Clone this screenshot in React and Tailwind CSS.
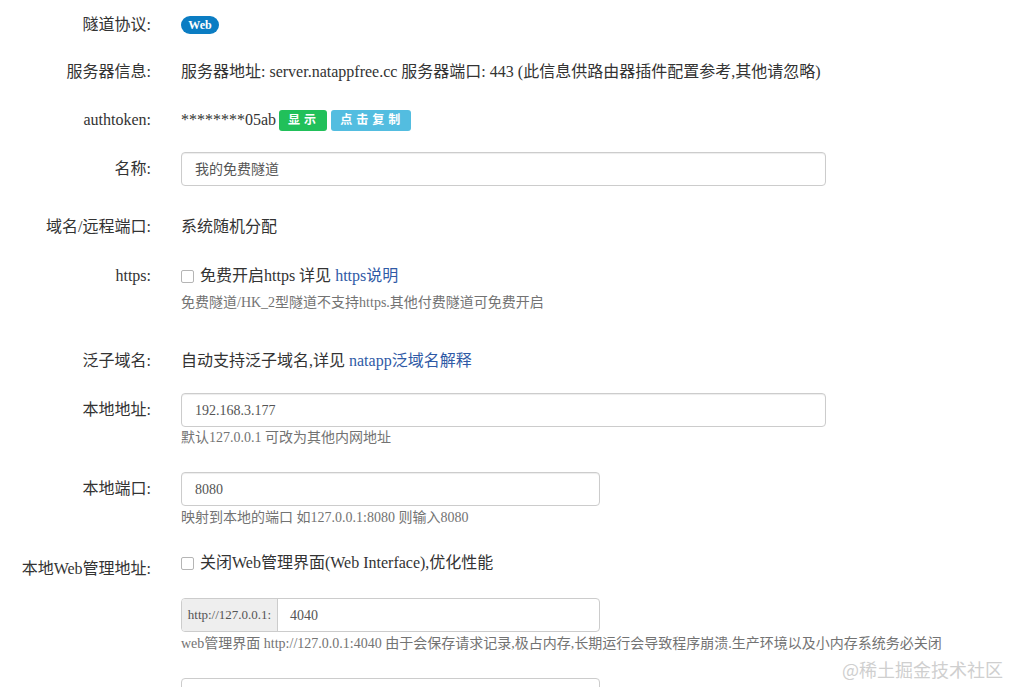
import React from "react";

const font = { fontFamily: '"Liberation Serif", "Noto Sans CJK SC", serif' };

function Row({ label, labelClass = "items-center", children, className = "" }) {
  return (
    <div className={`flex ${className}`}>
      <div className={`w-[151px] shrink-0 h-[34px] flex justify-end text-[16px] text-[#333] ${labelClass}`}>
        {label}
      </div>
      <div className="ml-[30px] flex-1">{children}</div>
    </div>
  );
}

function Line({ children }) {
  return <div className="h-[34px] flex items-center text-[16px] text-[#333]">{children}</div>;
}

function Input({ value, width }) {
  return (
    <div
      className={`${width} h-[34px] border border-[#ccc] rounded-[4px] flex items-center pl-[13px] text-[14px] text-[#555] shadow-[inset_0_1px_1px_rgba(0,0,0,0.075)]`}
    >
      {value}
    </div>
  );
}

function Help({ children, className = "" }) {
  return <div className={`leading-[20px] text-[14px] text-[#737373] ${className}`}>{children}</div>;
}

function Check() {
  return <span className="inline-block w-[13px] h-[13px] border border-[#b5b5b5] rounded-[2px] bg-white mr-[6px]" />;
}

export default function App() {
  return (
    <div className="relative w-[1010px] h-[687px] overflow-hidden bg-white" style={font}>
      <div className="pt-[8px]">
        <Row label="隧道协议:">
          <Line>
            <span className="inline-flex items-center justify-center h-[18px] w-[38px] rounded-full bg-[#0b7dc3] text-white text-[12px] font-bold">
              Web
            </span>
          </Line>
        </Row>

        <Row label="服务器信息:" className="mt-[13px]">
          <Line>服务器地址: server.natappfree.cc 服务器端口: 443 (此信息供路由器插件配置参考,其他请忽略)</Line>
        </Row>

        <Row label="authtoken:" className="mt-[14px]">
          <Line>
            <span>********05ab</span>
            <span className="ml-[3px] inline-flex items-center h-[21px] px-[7px] rounded-[3px] bg-[#21c05a] text-white text-[12px] font-bold tracking-[4px] pl-[9px]">
              显示
            </span>
            <span className="ml-[4px] inline-flex items-center h-[21px] px-[7px] pl-[9px] rounded-[3px] bg-[#53bde0] text-white text-[12px] font-bold tracking-[4px]">
              点击复制
            </span>
          </Line>
        </Row>

        <Row label="名称:" className="mt-[15px]">
          <Input value="我的免费隧道" width="w-[645px]" />
        </Row>

        <Row label="域名/远程端口:" className="mt-[24px]">
          <Line>系统随机分配</Line>
        </Row>

        <Row label="https:" className="mt-[15px]">
          <Line>
            <Check />
            免费开启https 详见&nbsp;<span className="text-[#2f5aa6]">https说明</span>
          </Line>
          <Help>免费隧道/HK_2型隧道不支持https.其他付费隧道可免费开启</Help>
        </Row>

        <Row label="泛子域名:" className="mt-[31px]">
          <Line>
            自动支持泛子域名,详见&nbsp;<span className="text-[#2f5aa6]">natapp泛域名解释</span>
          </Line>
        </Row>

        <Row label="本地地址:" className="mt-[15px]">
          <Input value="192.168.3.177" width="w-[645px]" />
          <Help className="mt-[1px]">默认127.0.0.1 可改为其他内网地址</Help>
        </Row>

        <Row label="本地端口:" className="mt-[24px]">
          <Input value="8080" width="w-[419px]" />
          <Help className="mt-[2px]">映射到本地的端口 如127.0.0.1:8080 则输入8080</Help>
        </Row>

        <Row label="本地Web管理地址:" labelClass="items-center mt-[6px]" className="mt-[18px]">
          <Line>
            <Check />
            关闭Web管理界面(Web Interface),优化性能
          </Line>
          <div className="mt-[18px] w-[419px] h-[34px] flex border border-[#ccc] rounded-[4px] overflow-hidden">
            <div className="w-[96px] shrink-0 bg-[#eee] border-r border-[#ccc] flex items-center justify-center text-[13px] text-[#555]">
              http://127.0.0.1:
            </div>
            <div className="flex-1 flex items-center pl-[12px] text-[14px] text-[#555]">4040</div>
          </div>
          <Help className="mt-[2px]">
            web管理界面 http://127.0.0.1:4040 由于会保存请求记录,极占内存,长期运行会导致程序崩溃.生产环境以及小内存系统务必关闭
          </Help>
          <div className="mt-[24px] w-[419px] h-[34px] border border-[#ccc] rounded-[4px]" />
        </Row>
      </div>

      <div className="absolute right-[7px] bottom-[4px] text-[18px] text-[#cfcfcf]" style={{ fontFamily: '"Noto Sans CJK SC", sans-serif' }}>
        @稀土掘金技术社区
      </div>
    </div>
  );
}
